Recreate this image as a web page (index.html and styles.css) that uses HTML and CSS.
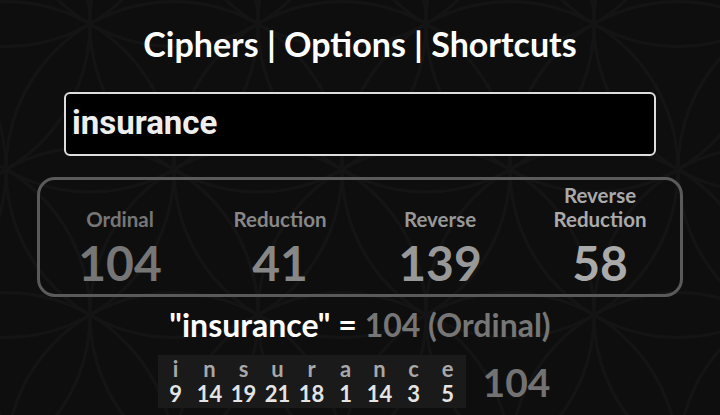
FILE: index.html
```html
<!DOCTYPE html>
<html lang="en">
<head>
  <meta charset="UTF-8">
  <title>Gematria Calculator</title>
  <meta name="viewport" content="width=device-width, initial-scale=1">
  <link rel="stylesheet" href="styles.css">
</head>
<body>
  <div class="page">
    <div class="nav">Ciphers | Options | Shortcuts</div>

    <div class="phrase-box">insurance</div>

    <div class="totals">
      <div class="cipher c1">
        <div class="cipher-name">Ordinal</div>
        <div class="cipher-value">104</div>
      </div>
      <div class="cipher c2">
        <div class="cipher-name">Reduction</div>
        <div class="cipher-value">41</div>
      </div>
      <div class="cipher c3">
        <div class="cipher-name">Reverse</div>
        <div class="cipher-value">139</div>
      </div>
      <div class="cipher c4">
        <div class="cipher-name">Reverse<br>Reduction</div>
        <div class="cipher-value">58</div>
      </div>
    </div>

    <div class="summary">"insurance" = <span class="summary-value">104 (Ordinal)</span></div>

    <div class="breakdown">
      <div class="letters">
        <div class="cell"><span class="ch">i</span><span class="num">9</span></div>
        <div class="cell"><span class="ch">n</span><span class="num">14</span></div>
        <div class="cell"><span class="ch">s</span><span class="num">19</span></div>
        <div class="cell"><span class="ch">u</span><span class="num">21</span></div>
        <div class="cell"><span class="ch">r</span><span class="num">18</span></div>
        <div class="cell"><span class="ch">a</span><span class="num">1</span></div>
        <div class="cell"><span class="ch">n</span><span class="num">14</span></div>
        <div class="cell"><span class="ch">c</span><span class="num">3</span></div>
        <div class="cell"><span class="ch">e</span><span class="num">5</span></div>
      </div>
      <div class="breakdown-total">104</div>
    </div>
  </div>
</body>
</html>
```

FILE: styles.css
```css
* {
  box-sizing: border-box;
}
body {
  margin: 0;
  height: 415px;
  overflow: hidden;
  background-color: #0e0e0e;
  background-image: url("data:image/svg+xml,%3Csvg xmlns='http://www.w3.org/2000/svg' width='120' height='207.85'%3E%3Cg fill='none' stroke='%23141414' stroke-width='2'%3E%3Ccircle cx='-60' cy='-103.92' r='120'/%3E%3Ccircle cx='60' cy='-103.92' r='120'/%3E%3Ccircle cx='180' cy='-103.92' r='120'/%3E%3Ccircle cx='0' cy='0' r='120'/%3E%3Ccircle cx='120' cy='0' r='120'/%3E%3Ccircle cx='-60' cy='103.92' r='120'/%3E%3Ccircle cx='60' cy='103.92' r='120'/%3E%3Ccircle cx='180' cy='103.92' r='120'/%3E%3Ccircle cx='0' cy='207.85' r='120'/%3E%3Ccircle cx='120' cy='207.85' r='120'/%3E%3Ccircle cx='-60' cy='311.77' r='120'/%3E%3Ccircle cx='60' cy='311.77' r='120'/%3E%3Ccircle cx='180' cy='311.77' r='120'/%3E%3C/g%3E%3C/svg%3E");
  background-size: 168px 291px;
  background-position: -78px 24px;
  font-family: Lato, "Open Sans", sans-serif;
  font-weight: bold;
  color: #fff;
}
.page {
  display: flex;
  flex-direction: column;
  align-items: center;
  padding-top: 24px;
}
.nav {
  font-size: 34px;
  line-height: 40px;
  color: #fff;
}
.phrase-box {
  margin-top: 28px;
  width: 592px;
  height: 64px;
  padding: 0 6px;
  background: #000;
  border: 2px solid #ddd;
  border-radius: 6px;
  font-family: Roboto, sans-serif;
  font-size: 33px;
  line-height: 58px;
  color: #eee;
}
.totals {
  margin-top: 21px;
  width: 646px;
  height: 120px;
  border: 3px solid #5a5a5a;
  border-radius: 18px;
  display: flex;
  justify-content: center;
  align-items: flex-end;
  padding-bottom: 4px;
}
.cipher {
  width: 160px;
  text-align: center;
}
.cipher-name {
  font-size: 20.5px;
  line-height: 24px;
}
.cipher-value {
  margin-top: 5px;
  font-size: 48px;
  line-height: 54px;
}
.c1 { color: #767676; }
.c2 { color: #878787; }
.c3 { color: #989898; }
.c4 { color: #aaaaaa; }
.summary {
  margin-top: 8px;
  font-size: 32px;
  line-height: 40px;
  color: #fff;
}
.summary-value {
  color: #767676;
}
.breakdown {
  margin-top: 10px;
  display: flex;
  align-items: center;
  gap: 17px;
  margin-right: 12px;
}
.letters {
  display: flex;
  background: #1a1a1a;
  height: 53px;
  padding: 1px 1px 0;
}
.cell {
  width: 34px;
  display: flex;
  flex-direction: column;
  align-items: center;
  font-size: 22px;
  line-height: 25px;
}
.ch {
  color: #a8a8a8;
}
.num {
  color: #e4e4e4;
}
.breakdown-total {
  font-size: 39px;
  line-height: 50px;
  color: #727272;
}
```
